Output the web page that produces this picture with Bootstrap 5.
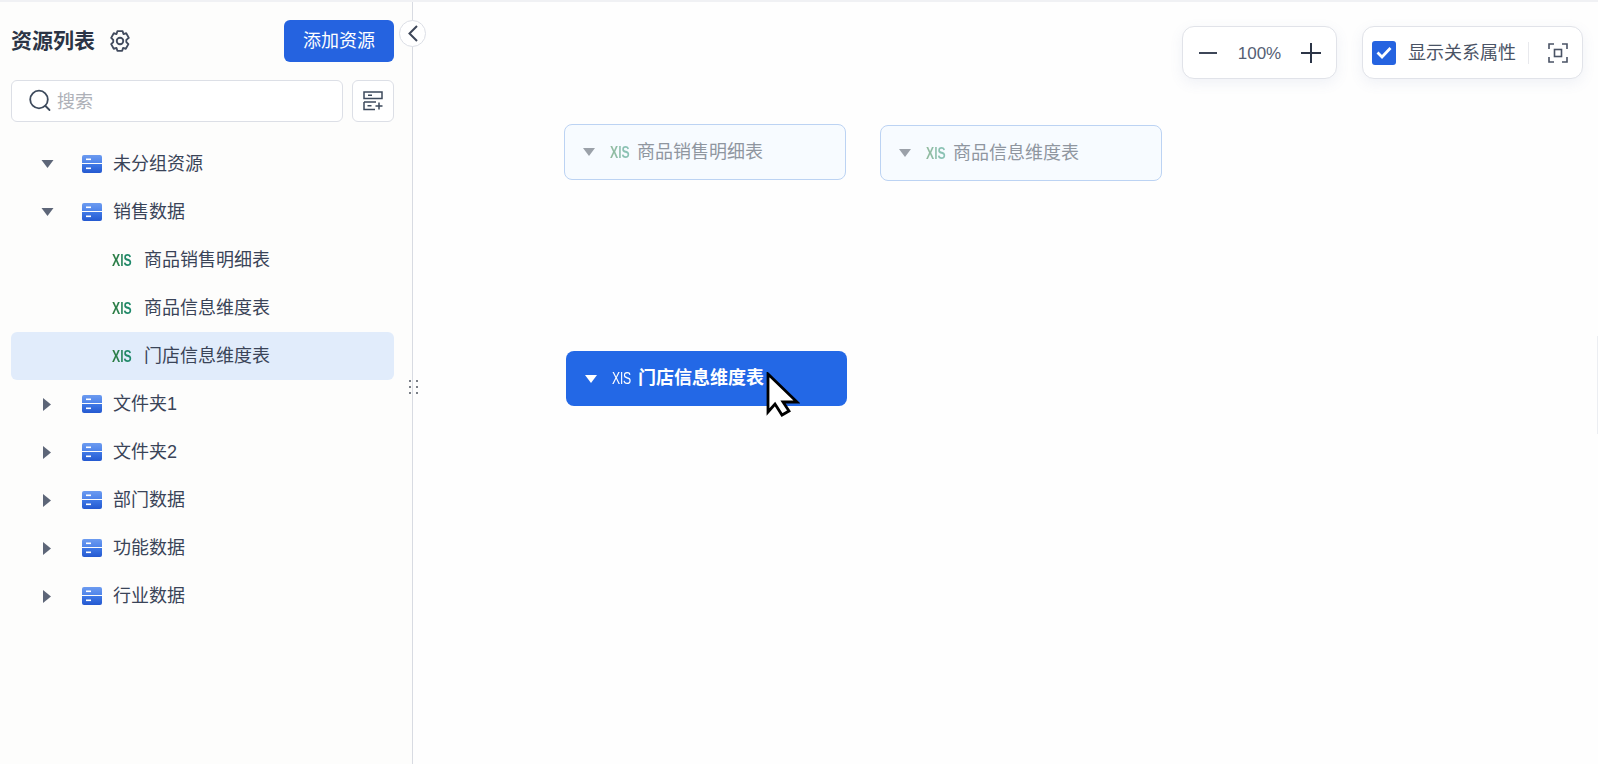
<!DOCTYPE html>
<html lang="zh-CN">

<head>
    <meta charset="UTF-8">
    <meta name="viewport" content="width=device-width, initial-scale=1.0">
    <title>资源列表</title>
    <link rel="stylesheet" href="https://cdn.jsdelivr.net/npm/bootstrap@5.3.0/dist/css/bootstrap.min.css">
    <style>
        html, body { height: 100%; overflow: hidden; }
        body { font-family: "Liberation Sans", "Noto Sans CJK SC", sans-serif; color: #3a4458; background: #fefefe; }
        .app-shell { height: 764px; border-top: 2px solid #f0f1f4; }
        .side-panel { width: 413px; flex: none; background: #fdfdfc; border-right: 1px solid #d8dbe2; padding: 18px 18px 0 11px; position: relative; z-index: 2; }
        .side-title { font-size: 21px; font-weight: 700; color: #2b3445; line-height: 42px; }
        .gear-icon { margin-left: 13px; }
        .add-btn { width: 110px; height: 42px; padding: 0; background: #2563e0; border: 0; border-radius: 6px; color: #fff; font-size: 18px; }
        .search-row { margin-top: 18px; gap: 9px; }
        .search-box { height: 42px; border: 1px solid #dcdfe6; border-radius: 6px; background: #fff; padding-left: 16px; color: #aeb1b8; font-size: 18px; }
        .search-box span { padding-top: 3px; }
        .search-icon { margin-right: 5px; }
        .square-btn { width: 42px; height: 42px; flex: none; border: 1px solid #dcdfe6; border-radius: 6px; background: #fff; }
        .tree-list { margin-top: 18px; }
        .tree-row { height: 48px; font-size: 18px; color: #3a4458; border-radius: 6px; }
        .tree-row.picked { background: #e1ecfb; }
        .arrow-cell { width: 71px; padding-left: 29px; flex: none; }
        .arrow-slot { width: 14px; }
        .leaf-pad { width: 101px; flex: none; }
        .xls-tag { font-family: "Liberation Sans", sans-serif; font-weight: 700; font-size: 17px; line-height: 1; display: inline-block; flex: none; width: 32px; margin-right: 0; transform: scaleX(.72); transform-origin: left center; background: linear-gradient(90deg, #2f7a3c 0%, #1f8a6c 70%); -webkit-background-clip: text; background-clip: text; color: transparent; }
        .folder-icon { margin-right: 11px; flex: none; }
        .collapse-btn { position: absolute; right: -14px; top: 18px; width: 27px; height: 27px; border-radius: 50%; border: 1px solid #dcdfe6; background: #fff; }
        .drag-grip { position: absolute; right: -8px; top: 377px; }
        .flow-area { position: relative; flex: 1; background: #fefefe; }
        .tool-strip { position: absolute; top: 24px; right: 15px; gap: 25px; }
        .tool-box { height: 53px; background: #fff; border: 1px solid #e1e3e9; border-radius: 12px; box-shadow: 0 4px 14px rgba(90, 110, 170, .09); }
        .zoom-box { width: 155px; padding: 0 15px 0 15px; font-size: 17px; color: #556074; }
        .rel-box { width: 221px; padding: 0 0 0 9px; font-size: 18px; color: #4a5365; }
        .tool-text { padding-top: 2px; }
        .check-mark { width: 24px; height: 24px; border-radius: 3px; background: #2563e0; margin-right: 12px; flex: none; }
        .tool-split { width: 1px; height: 22px; background: #e8e9ed; margin: 0 19px 0 12px; }
        .flow-node { position: absolute; width: 282px; height: 56px; border-radius: 8px; font-size: 18px; padding-left: 18px; }
        .flow-node.faded { background: #f7fbff; border: 1px solid #bcd3f3; color: #8f969f; }
        .flow-node.faded .xls-tag { opacity: .5; margin-right: -5px; }
        .flow-node.active { width: 281px; height: 55px; padding-left: 19px; background: #2368e6; color: #fff; font-weight: 700; }
        .flow-node.active .xls-tag { background: none; color: #fff; margin-right: -6px; font-weight: 400; }
        .node-arrow { margin-right: 15px; flex: none; }
        .mouse-pointer { position: absolute; left: 353px; top: 370px; }
        .edge-mark { position: absolute; right: 0; top: 334px; width: 1px; height: 98px; background: #eceef2; }
    </style>
</head>

<body>
    <div class="app-shell d-flex">
        <aside class="side-panel">
            <div class="d-flex align-items-center justify-content-between">
                <div class="d-flex align-items-center">
                    <span class="side-title">资源列表</span>
                    <svg class="gear-icon" width="24" height="24" viewBox="0 0 22 22" fill="none" stroke="#414b5e" stroke-width="1.7" stroke-linejoin="round"><path d="M8.600 2h4.800l.8 2.600 2.500-.7 2.400 4.200L16.800 10v2l1.900 1.900-2.400 4.200-2.500-.7-.8 2.600H8.600l-.8-2.600-2.500.7-2.400-4.200L4.800 12v-2L2.900 8.100l2.400-4.200 2.500.7z"/><circle cx="11" cy="11" r="3"/></svg>
                </div>
                <button class="add-btn" type="button">添加资源</button>
            </div>
            <div class="search-row d-flex">
                <div class="search-box d-flex align-items-center flex-grow-1">
                    <svg class="search-icon" width="24" height="24" viewBox="0 0 24 24" fill="none" stroke="#3d4a5c" stroke-width="1.8" stroke-linecap="round"><circle cx="11" cy="10.500" r="8.800"/><path d="M17.500 17l4 4"/></svg>
                    <span>搜索</span>
                </div>
                <div class="square-btn d-flex align-items-center justify-content-center">
                    <svg width="20" height="20" viewBox="0 0 20 20" fill="none" stroke="#3d4a5c" stroke-width="1.500"><path d="M1 1h18v6.500H1zM5 4.300h4M1 11h12M1 11v7.500h11M4.500 14.800h4M16 11.500v7M12.500 15h7"/></svg>
                </div>
            </div>
            <div class="tree-list" id="tree"></div>
            <div class="collapse-btn d-flex align-items-center justify-content-center">
                <svg width="10" height="17" viewBox="0 0 10 17" fill="none" stroke="#3d4658" stroke-width="2"><path d="M9 1L1.500 8.500 9 16"/></svg>
            </div>
            <svg class="drag-grip" width="12" height="17" viewBox="0 0 12 17" fill="#7b8088"><rect x="1" y="1" width="2" height="2"/><rect x="8" y="1" width="2" height="2"/><rect x="1" y="7" width="2" height="2"/><rect x="8" y="7" width="2" height="2"/><rect x="1" y="13" width="2" height="2"/><rect x="8" y="13" width="2" height="2"/></svg>
        </aside>

        <main class="flow-area">
            <div class="tool-strip d-flex">
                <div class="tool-box zoom-box d-flex align-items-center justify-content-between">
                    <svg width="20" height="20" viewBox="0 0 20 20" stroke="#3d4658" stroke-width="2"><path d="M1 10h18"/></svg>
                    <span class="tool-text">100%</span>
                    <svg width="20" height="20" viewBox="0 0 20 20" stroke="#2c3547" stroke-width="2"><path d="M0 10h20M10 0v20"/></svg>
                </div>
                <div class="tool-box rel-box d-flex align-items-center">
                    <span class="check-mark d-flex align-items-center justify-content-center">
                        <svg width="16" height="13" viewBox="0 0 16 13" fill="none" stroke="#fff" stroke-width="2.800"><path d="M1.500 6.500l4.500 4.500 8.500-9"/></svg>
                    </span>
                    <span class="tool-text text-nowrap">显示关系属性</span>
                    <span class="tool-split"></span>
                    <svg width="20" height="20" viewBox="0 0 20 20" fill="none" stroke="#4a5365" stroke-width="1.600"><path d="M1 6V1h5M14 1h5v5M19 14v5h-5M6 19H1v-5"/><rect x="6.500" y="6.500" width="7" height="7"/></svg>
                </div>
            </div>
            <div id="nodes"></div>
            <svg class="mouse-pointer" width="34" height="46" viewBox="-2 -2 34 46"><path d="M0 0v38l7-8 7 11 7-4-6-9h14z" fill="#fff" stroke="#000" stroke-width="2.800"/></svg>
            <div class="edge-mark"></div>
        </main>
    </div>

    <script>
        const folderSvg = `<svg class="folder-icon" width="20" height="20" viewBox="0 0 20 20"><defs><linearGradient id="fa" x1="0" y1="0" x2="0" y2="1"><stop offset="0" stop-color="#6c9bf0"/><stop offset="1" stop-color="#4f84ea"/></linearGradient><linearGradient id="fb" x1="0" y1="0" x2="0" y2="1"><stop offset="0" stop-color="#3f78e6"/><stop offset="1" stop-color="#2459d0"/></linearGradient></defs><path d="M2 1h16a2 2 0 0 1 2 2v6H0V3a2 2 0 0 1 2-2z" fill="url(#fa)"/><path d="M0 10h20v7a2 2 0 0 1-2 2H2a2 2 0 0 1-2-2z" fill="url(#fb)"/><rect x="4" y="4.500" width="5" height="1.600" fill="#fff"/><rect x="4" y="13.500" width="5" height="1.600" fill="#fff"/></svg>`;
        const downArrow = (c, w) => `<svg width="${w}" height="8" viewBox="0 0 12 8"><path d="M0 0h12L6 8z" fill="${c}"/></svg>`;
        const rightArrow = `<svg width="8" height="13" viewBox="0 0 8 13"><path d="M0 0l8 6.500L0 13z" fill="#5d6678"/></svg>`;

        const treeRows = [
            { label: "未分组资源", open: true },
            { label: "销售数据", open: true },
            { label: "商品销售明细表", leaf: true },
            { label: "商品信息维度表", leaf: true },
            { label: "门店信息维度表", leaf: true, picked: true },
            { label: "文件夹1" },
            { label: "文件夹2" },
            { label: "部门数据" },
            { label: "功能数据" },
            { label: "行业数据" }
        ];

        document.getElementById('tree').innerHTML = treeRows.map(row => {
            if (row.leaf) {
                return `<div class="tree-row d-flex align-items-center ${row.picked ? 'picked' : ''}"><span class="leaf-pad"></span><span class="xls-tag">XlS</span><span>${row.label}</span></div>`;
            }
            const arrow = row.open ? downArrow('#5d6678', 13) : rightArrow;
            return `<div class="tree-row d-flex align-items-center"><span class="arrow-cell"><span class="arrow-slot d-flex align-items-center justify-content-center">${arrow}</span></span>${folderSvg}<span>${row.label}</span></div>`;
        }).join('');

        const flowNodes = [
            { label: "商品销售明细表", left: 151, top: 122, kind: "faded" },
            { label: "商品信息维度表", left: 467, top: 123, kind: "faded" },
            { label: "门店信息维度表", left: 153, top: 349, kind: "active" }
        ];

        document.getElementById('nodes').innerHTML = flowNodes.map(node => {
            const color = node.kind === 'active' ? '#fff' : '#9ba1a9';
            return `<div class="flow-node ${node.kind} d-flex align-items-center" style="left:${node.left}px;top:${node.top}px"><span class="node-arrow d-flex">${downArrow(color, 12)}</span><span class="xls-tag">XlS</span><span>${node.label}</span></div>`;
        }).join('');
    </script>
    <script src="https://cdn.jsdelivr.net/npm/bootstrap@5.3.0/dist/js/bootstrap.bundle.min.js"></script>
</body>

</html>
